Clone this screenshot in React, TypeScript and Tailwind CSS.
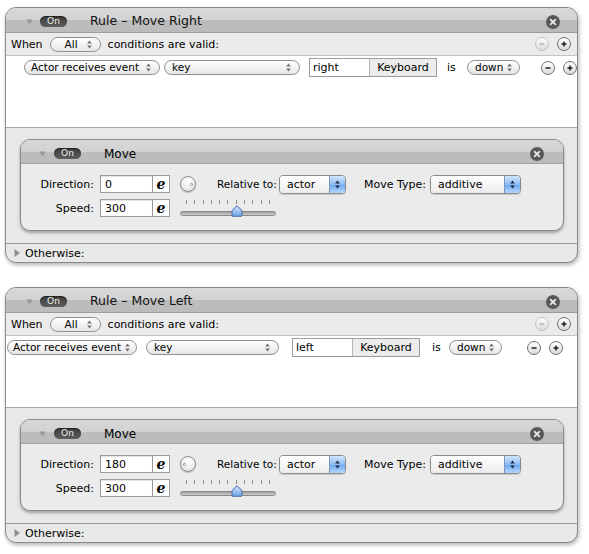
import React from 'react';

type RowLayout = {
    wrap: string;
    actor: string;
    key: string;
    field: string;
    is: string;
    down: string;
    minus: string;
};

const rules: { title: string; dir: string; angle: number; word: string; row: RowLayout }[] = [
    {
        title: 'Rule – Move Right',
        dir: '0',
        angle: 0,
        word: 'right',
        row: {
            wrap: 'pl-[18px]',
            actor: 'w-[136px] pl-[6px] pr-[8px]',
            key: 'ml-[4px] w-[136px]',
            field: 'ml-[9px]',
            is: 'ml-[10px] w-[20px]',
            down: 'w-[53px]',
            minus: 'ml-[21px]',
        },
    },
    {
        title: 'Rule – Move Left',
        dir: '180',
        angle: 180,
        word: 'left',
        row: {
            wrap: 'pl-[1px]',
            actor: 'w-[130px] pl-[5px] pr-[6px]',
            key: 'ml-[9px] w-[133px]',
            field: 'ml-[13px]',
            is: 'ml-[12px] w-[17px]',
            down: 'w-[53px]',
            minus: 'ml-[25px]',
        },
    },
];

function Arrows({ color = '#6e6e6e' }: { color?: string }) {
    return (
        <svg width="5" height="9" viewBox="0 0 5 9" className="shrink-0">
            <path d="M2.5 0.6 L4.8 3.5 H0.2 Z" fill={color} />
            <path d="M2.5 8.4 L4.8 5.5 H0.2 Z" fill={color} />
        </svg>
    );
}

function RoundPopup({ label, className }: { label: string; className: string }) {
    return (
        <div
            className={`flex h-[15px] shrink-0 items-center justify-between rounded-full border border-[#8e8e8e] bg-[linear-gradient(to_bottom,#ffffff,#e6e6e6)] text-[10.5px] leading-none text-black ${className}`}
        >
            <span>{label}</span>
            <Arrows />
        </div>
    );
}

function BluePopup({ label, className }: { label: string; className: string }) {
    return (
        <div
            className={`flex h-[19px] shrink-0 overflow-hidden rounded-[4px] border border-[#8a8a8a] shadow-[0_1px_1px_rgba(0,0,0,0.15)] ${className}`}
        >
            <div className="flex flex-1 items-center bg-[linear-gradient(to_bottom,#ffffff,#ececec)] pl-[7px] text-[11px] leading-none">
                {label}
            </div>
            <div className="flex w-[16px] items-center justify-center border-l border-[#7f95c0] bg-[linear-gradient(to_bottom,#d2e5fb,#8bbcf3_50%,#6aa5ee_51%,#b6d8fb)]">
                <Arrows color="#1c2740" />
            </div>
        </div>
    );
}

function CircleBtn({ plus, disabled }: { plus?: boolean; disabled?: boolean }) {
    return (
        <div
            className={`flex h-[14px] w-[14px] shrink-0 items-center justify-center rounded-full border bg-[linear-gradient(to_bottom,#ffffff,#dadada)] ${
                disabled ? 'border-[#c2c2c2] text-[#b4b4b4]' : 'border-[#707070] text-[#1e1e1e]'
            }`}
        >
            <svg width="8" height="8" viewBox="0 0 8 8">
                <path d="M1.5 4 H6.5" stroke="currentColor" strokeWidth="1.5" />
                {plus && <path d="M4 1.5 V6.5" stroke="currentColor" strokeWidth="1.5" />}
            </svg>
        </div>
    );
}

function CloseBtn() {
    return (
        <div className="flex h-[14px] w-[14px] shrink-0 items-center justify-center rounded-full bg-[#595959]">
            <svg width="8" height="8" viewBox="0 0 8 8">
                <path d="M1.6 1.6 L6.4 6.4 M6.4 1.6 L1.6 6.4" stroke="#ececec" strokeWidth="1.7" strokeLinecap="round" />
            </svg>
        </div>
    );
}

function OnPill() {
    return (
        <div className="flex h-[11px] w-[27px] shrink-0 items-center justify-center rounded-full bg-[linear-gradient(to_bottom,#3c3c3c,#5e5e5e)] text-[9px] leading-none text-[#f0f0f0] shadow-[inset_0_1px_1px_rgba(0,0,0,0.5)]">
            On
        </div>
    );
}

function DownTriangle() {
    return (
        <svg width="7" height="6" viewBox="0 0 7 6" className="shrink-0">
            <path d="M0 0.5 H7 L3.5 5.5 Z" fill="#9c9c9c" />
        </svg>
    );
}

function ExprField({ value }: { value: string }) {
    return (
        <div className="flex h-[18px] shrink-0">
            <div className="flex w-[53px] items-center border border-[#9a9a9a] bg-white pl-[4px] text-[11px] leading-none shadow-[inset_0_1px_1px_rgba(0,0,0,0.12)]">
                {value}
            </div>
            <div className="flex w-[17px] items-center justify-center border border-l-0 border-[#9a9a9a] bg-white font-['DejaVu_Serif',serif] text-[14px] font-bold italic leading-none">
                e
            </div>
        </div>
    );
}

function Knob({ angle }: { angle: number }) {
    return (
        <div className="relative h-[16px] w-[16px] shrink-0 rounded-full border border-[#8a8a8a] bg-[radial-gradient(circle_at_50%_30%,#ffffff,#dedede)] shadow-[0_1px_1px_rgba(0,0,0,0.2)]">
            <div
                className={`absolute top-[6px] h-[3px] w-[3px] rounded-full border border-[#8a8a8a] bg-white ${
                    angle === 0 ? 'right-[2px]' : 'left-[2px]'
                }`}
            />
        </div>
    );
}

function Slider() {
    return (
        <div className="relative h-[18px] w-[96px] shrink-0">
            <div className="flex justify-between px-[6px] pt-[1px]">
                {Array.from({ length: 11 }).map((_, i) => (
                    <div key={i} className="h-[4px] w-px bg-[#8c8c8c]" />
                ))}
            </div>
            <div className="absolute left-0 right-0 top-[12px] h-[5px] rounded-full border border-[#8a8a8a] bg-[linear-gradient(to_bottom,#9e9e9e,#cfcfcf)]" />
            <svg className="absolute left-[51px] top-[6px]" width="12" height="12" viewBox="0 0 12 12">
                <defs>
                    <linearGradient id="thumb" x1="0" y1="0" x2="0" y2="1">
                        <stop offset="0" stopColor="#d3e6fb" />
                        <stop offset="1" stopColor="#6aa2e8" />
                    </linearGradient>
                </defs>
                <path d="M1 5.5 L6 0.8 L11 5.5 V10.5 Q11 11.3 10.2 11.3 H1.8 Q1 11.3 1 10.5 Z" fill="url(#thumb)" stroke="#4b6ea6" strokeWidth="1" />
            </svg>
        </div>
    );
}

function MovePanel({ dir, angle }: { dir: string; angle: number }) {
    return (
        <div className="ml-[14px] mr-[13px] mt-[10px] flex h-[92px] flex-col overflow-hidden rounded-[10px] border border-[#8a8a8a] bg-[#ebebeb] shadow-[0_2px_3px_rgba(0,0,0,0.3)]">
            <div className="flex h-[24px] shrink-0 items-center border-b border-[#a2a2a2] bg-[linear-gradient(to_bottom,#d8d8d8_0,#d2d2d2_12px,#bdbdbd_12px,#bbbbbb_100%)] pl-[18px] pr-[19px] pt-[4px]">
                <DownTriangle />
                <div className="ml-[8px]">
                    <OnPill />
                </div>
                <span className="ml-[23px] text-[12px] leading-none">Move</span>
                <div className="ml-auto">
                    <CloseBtn />
                </div>
            </div>
            <div className="flex flex-col gap-[6px] pt-[11px]">
                <div className="flex h-[18px] items-center">
                    <span className="w-[73px] text-right text-[11px] leading-none">Direction:</span>
                    <div className="ml-[6px]">
                        <ExprField value={dir} />
                    </div>
                    <div className="ml-[10px]">
                        <Knob angle={angle} />
                    </div>
                    <span className="ml-[21px] w-[62px] whitespace-nowrap text-[10.5px] leading-none">Relative to:</span>
                    <BluePopup label="actor" className="w-[67px]" />
                    <span className="ml-[18px] w-[66px] whitespace-nowrap text-[11px] leading-none">Move Type:</span>
                    <BluePopup label="additive" className="w-[91px]" />
                </div>
                <div className="flex h-[18px] items-start">
                    <span className="w-[73px] self-center text-right text-[11px] leading-none">Speed:</span>
                    <div className="ml-[6px]">
                        <ExprField value="300" />
                    </div>
                    <div className="ml-[10px]">
                        <Slider />
                    </div>
                </div>
            </div>
        </div>
    );
}

function RulePanel({ title, dir, angle, word, row }: (typeof rules)[number]) {
    return (
        <div className="flex h-[256px] w-[573px] shrink-0 flex-col overflow-hidden rounded-[11px] border border-[#8a8a8a] bg-[#e8e8e8] shadow-[1px_2px_4px_rgba(0,0,0,0.3)]">
            <div className="flex h-[25px] shrink-0 items-center border-b border-[#9c9c9c] bg-[linear-gradient(to_bottom,#d9d9d9_0,#d3d3d3_12px,#bdbdbd_12px,#bbbbbb_100%)] pl-[20px] pr-[17px] pt-[3px]">
                <DownTriangle />
                <div className="ml-[7px]">
                    <OnPill />
                </div>
                <span className="ml-[23px] text-[12.5px] leading-none text-[#111]">{title}</span>
                <div className="ml-auto">
                    <CloseBtn />
                </div>
            </div>
            <div className="flex h-[23px] shrink-0 items-center border-b border-[#c4c4c4] bg-[#ebebeb] pl-[5px] pr-[6px] text-[11px] leading-none">
                <span>When</span>
                <RoundPopup label="All" className="ml-[7px] w-[51px] pl-[14px] pr-[8px]" />
                <span className="ml-[7px]">conditions are valid:</span>
                <div className="ml-auto flex gap-[8px]">
                    <CircleBtn disabled />
                    <CircleBtn plus />
                </div>
            </div>
            <div className="h-[72px] shrink-0 border-b border-[#a8a8a8] bg-white pt-[2px]">
                <div className={`flex h-[19px] items-center whitespace-nowrap text-[11px] leading-none ${row.wrap}`}>
                    <RoundPopup label="Actor receives event" className={row.actor} />
                    <RoundPopup label="key" className={`pl-[7px] pr-[8px] ${row.key}`} />
                    <div className={`flex h-[19px] shrink-0 border border-[#9c9c9c] shadow-[inset_0_1px_1px_rgba(0,0,0,0.12)] ${row.field}`}>
                        <div className="flex w-[59px] items-center bg-white pl-[3px]">{word}</div>
                        <div className="flex w-[67px] items-center justify-center border-l border-[#b4b4b4] bg-[#ececec]">
                            Keyboard
                        </div>
                    </div>
                    <span className={`shrink-0 ${row.is}`}>is</span>
                    <RoundPopup label="down" className={`pl-[7px] pr-[7px] ${row.down}`} />
                    <div className={`flex shrink-0 gap-[8px] ${row.minus}`}>
                        <CircleBtn />
                        <CircleBtn plus />
                    </div>
                </div>
            </div>
            <div className="h-[115px] shrink-0 pt-px">
                <MovePanel dir={dir} angle={angle} />
            </div>
            <div className="flex flex-1 items-center gap-[5px] border-t border-[#9a9a9a] pl-[8px] text-[11px] leading-none">
                <svg width="6" height="8" viewBox="0 0 6 8" className="shrink-0">
                    <path d="M0.5 0 V8 L6 4 Z" fill="#8e8e8e" />
                </svg>
                <span>Otherwise:</span>
            </div>
        </div>
    );
}

export default function App() {
    return (
        <div className="flex h-[554px] w-[589px] flex-col gap-[24px] overflow-hidden bg-white pl-[5px] pt-[7px] font-['DejaVu_Sans',sans-serif] text-black">
            {rules.map((r) => (
                <RulePanel key={r.title} {...r} />
            ))}
        </div>
    );
}
